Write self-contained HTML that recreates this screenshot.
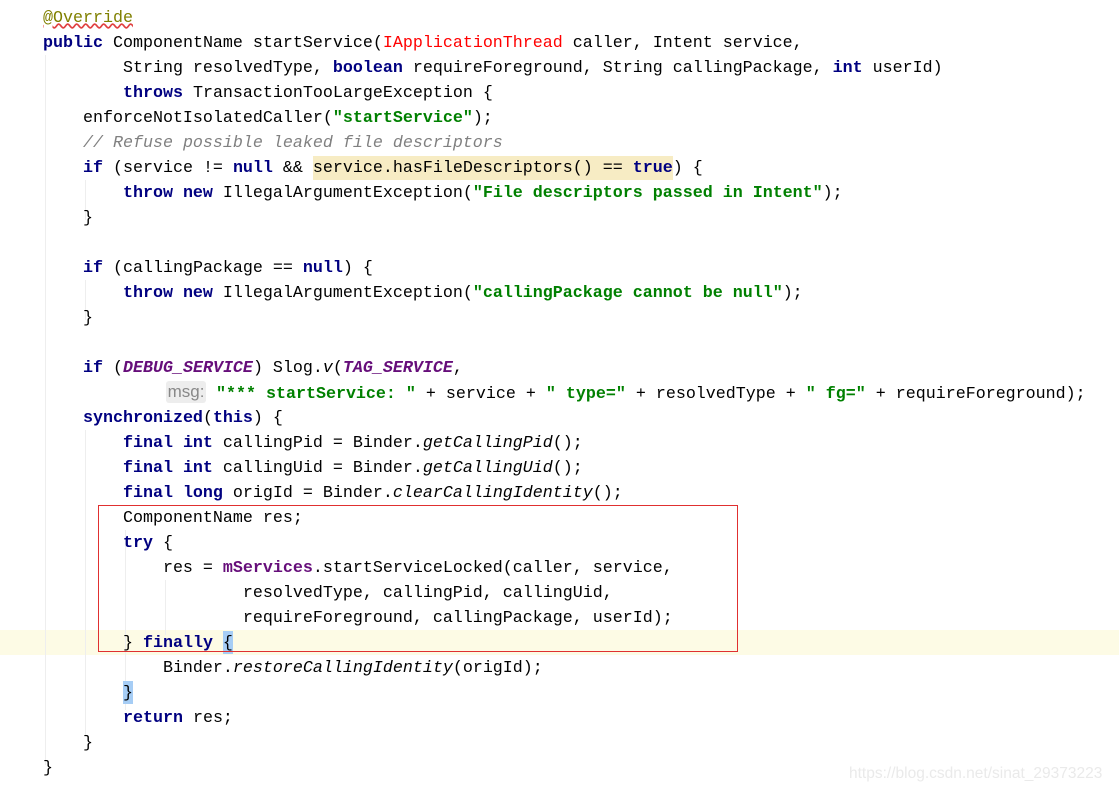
<!DOCTYPE html>
<html><head><meta charset="utf-8"><style>
html,body{margin:0;padding:0;background:#fff;width:1119px;height:795px;overflow:hidden;position:relative}
.l{position:absolute;left:43px;height:25px;line-height:25px;font-family:"Liberation Mono",monospace;font-size:16.67px;color:#000;white-space:pre}
.k{color:#000080;font-weight:bold}
.s{color:#008000;font-weight:bold}
.c{color:#808080;font-style:italic}
.a{color:#808000}
.f{color:#660E7A;font-weight:bold;font-style:italic}
.m{color:#660E7A;font-weight:bold}
.i{font-style:italic}
.r{color:#ff0000}
.g{position:absolute;width:1px;background:#eeeeee}
.hint{display:inline-block;width:40px;height:22px;line-height:22px;text-align:center;background:#ededed;color:#888;font-family:"Liberation Sans",sans-serif;font-size:17px;border-radius:3px;vertical-align:1px}
</style></head><body>
<div style="position:absolute;left:0;top:630px;width:1119px;height:25px;background:#fdfbe5"></div>
<div class="g" style="left:45px;top:55px;height:710px"></div>
<div class="g" style="left:85px;top:430px;height:305px"></div>
<div class="g" style="left:125px;top:530px;height:180px"></div>
<div class="g" style="left:165px;top:580px;height:55px"></div>
<div class="g" style="left:85px;top:180px;height:40px"></div>
<div class="g" style="left:85px;top:280px;height:40px"></div>
<div style="position:absolute;left:313px;top:156px;width:360px;height:24px;background:#f7ecc4"></div>
<div style="position:absolute;left:223px;top:631px;width:10px;height:23px;background:#a6cdf5"></div>
<div style="position:absolute;left:123px;top:681px;width:10px;height:23px;background:#a6cdf5"></div>
<div class="l" style="top:6px"><span class="a" style="text-decoration:underline wavy #e04040">@Override</span></div>
<div class="l" style="top:31px"><span class="k">public</span> ComponentName startService(<span class="r">IApplicationThread</span> caller, Intent service,</div>
<div class="l" style="top:56px">        String resolvedType, <span class="k">boolean</span> requireForeground, String callingPackage, <span class="k">int</span> userId)</div>
<div class="l" style="top:81px">        <span class="k">throws</span> TransactionTooLargeException {</div>
<div class="l" style="top:106px">    enforceNotIsolatedCaller(<span class="s">"startService"</span>);</div>
<div class="l" style="top:131px">    <span class="c">// Refuse possible leaked file descriptors</span></div>
<div class="l" style="top:156px">    <span class="k">if</span> (service != <span class="k">null</span> &amp;&amp; service.hasFileDescriptors() == <span class="k">true</span>) {</div>
<div class="l" style="top:181px">        <span class="k">throw new</span> IllegalArgumentException(<span class="s">"File descriptors passed in Intent"</span>);</div>
<div class="l" style="top:206px">    }</div>
<div class="l" style="top:256px">    <span class="k">if</span> (callingPackage == <span class="k">null</span>) {</div>
<div class="l" style="top:281px">        <span class="k">throw new</span> IllegalArgumentException(<span class="s">"callingPackage cannot be null"</span>);</div>
<div class="l" style="top:306px">    }</div>
<div class="l" style="top:356px">    <span class="k">if</span> (<span class="f">DEBUG_SERVICE</span>) Slog.<span class="i">v</span>(<span class="f">TAG_SERVICE</span>,</div>
<div class="l" style="top:381px;left:166px"><span class="hint">msg:</span> <span class="s">"*** startService: "</span> + service + <span class="s">" type="</span> + resolvedType + <span class="s">" fg="</span> + requireForeground);</div>
<div class="l" style="top:406px">    <span class="k">synchronized</span>(<span class="k">this</span>) {</div>
<div class="l" style="top:431px">        <span class="k">final int</span> callingPid = Binder.<span class="i">getCallingPid</span>();</div>
<div class="l" style="top:456px">        <span class="k">final int</span> callingUid = Binder.<span class="i">getCallingUid</span>();</div>
<div class="l" style="top:481px">        <span class="k">final long</span> origId = Binder.<span class="i">clearCallingIdentity</span>();</div>
<div class="l" style="top:506px">        ComponentName res;</div>
<div class="l" style="top:531px">        <span class="k">try</span> {</div>
<div class="l" style="top:556px">            res = <span class="m">mServices</span>.startServiceLocked(caller, service,</div>
<div class="l" style="top:581px">                    resolvedType, callingPid, callingUid,</div>
<div class="l" style="top:606px">                    requireForeground, callingPackage, userId);</div>
<div class="l" style="top:631px">        } <span class="k">finally</span> {</div>
<div class="l" style="top:656px">            Binder.<span class="i">restoreCallingIdentity</span>(origId);</div>
<div class="l" style="top:681px">        }</div>
<div class="l" style="top:706px">        <span class="k">return</span> res;</div>
<div class="l" style="top:731px">    }</div>
<div class="l" style="top:756px">}</div>
<div style="position:absolute;left:98px;top:505px;width:638px;height:145px;border:1px solid #e03030"></div>
<div style="position:absolute;left:849px;top:765px;font-family:'Liberation Sans',sans-serif;font-size:15.5px;color:#eaeaea">https://blog.csdn.net/sinat_29373223</div>
</body></html>
